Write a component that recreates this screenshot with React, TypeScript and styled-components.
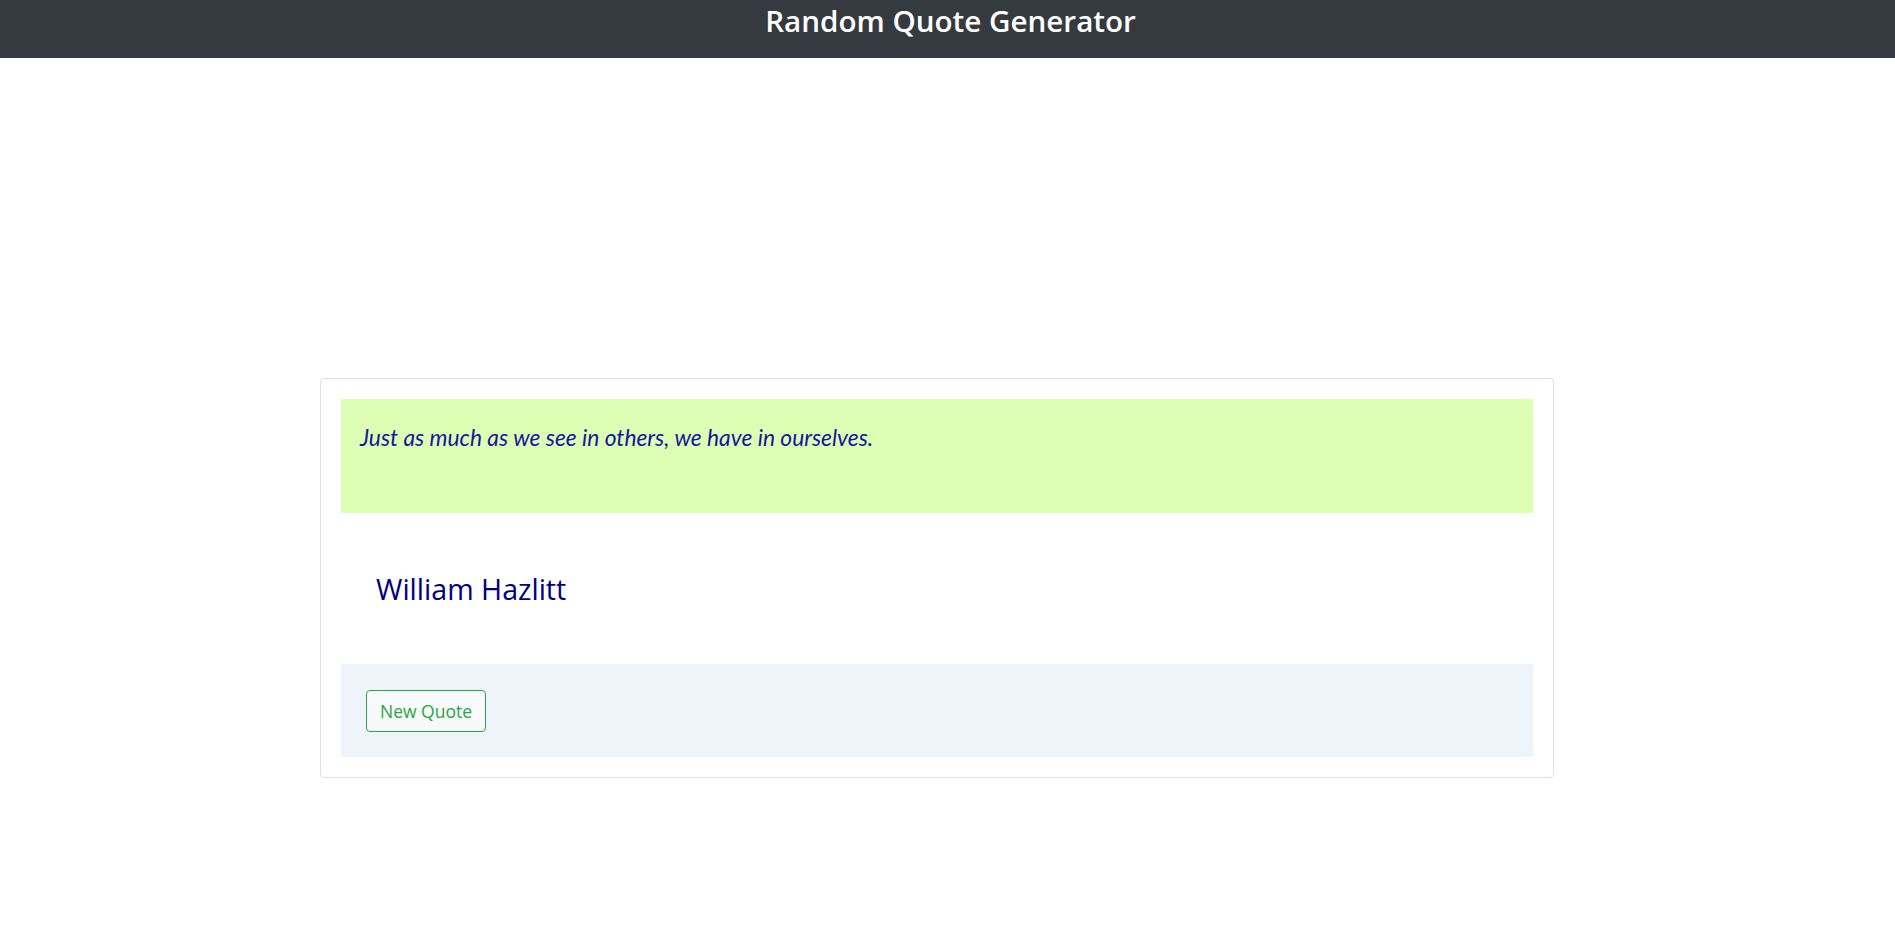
import React from "react";
import styled, { createGlobalStyle } from "styled-components";

const GlobalStyle = createGlobalStyle`
  html, body {
    margin: 0;
    padding: 0;
    background: #ffffff;
    font-family: "Open Sans", "Noto Sans", sans-serif;
  }
`;

const Header = styled.header`
  height: 58px;
  box-sizing: border-box;
  padding-top: 6px;
  background: #343a40;
  display: flex;
  justify-content: center;
`;

const Title = styled.h1`
  margin: 0 0 0 6px;
  color: #ffffff;
  font-family: "Open Sans", sans-serif;
  font-weight: 600;
  font-size: 29.6px;
  line-height: 30px;
`;

const Main = styled.main`
  padding: 320px 0 0 320px;
`;

const Card = styled.section`
  width: 1234px;
  box-sizing: border-box;
  border: 1px solid #dfdfdf;
  border-radius: 4px;
  padding: 20px;
  display: flex;
  flex-direction: column;
`;

const QuoteBox = styled.div`
  background: #ddffb4;
  height: 114px;
  box-sizing: border-box;
  padding: 24px 19px 0;
`;

const QuoteText = styled.p`
  margin: 0;
  font-family: "Lato", sans-serif;
  font-style: italic;
  font-size: 22.8px;
  line-height: normal;
  color: #16169e;
`;

const AuthorRow = styled.div`
  height: 151px;
  display: flex;
  align-items: center;
  padding-left: 35px;
`;

const Author = styled.h2`
  margin: 0;
  font-family: "Open Sans", sans-serif;
  font-weight: 400;
  font-size: 28.6px;
  line-height: normal;
  color: #000080;
`;

const Footer = styled.div`
  height: 93px;
  background: #eff3fa;
  display: flex;
  align-items: center;
  padding-left: 25px;
`;

const Button = styled.button`
  width: 120px;
  height: 42px;
  background: #f8f9fa;
  border: 1px solid #28a745;
  border-radius: 4px;
  color: #28a745;
  font-family: "Open Sans", sans-serif;
  font-size: 17.5px;
  cursor: pointer;
  padding: 0;
`;

export default function App() {
  return (
    <>
      <GlobalStyle />
      <Header>
        <Title>Random Quote Generator</Title>
      </Header>
      <Main>
        <Card>
          <QuoteBox>
            <QuoteText>Just as much as we see in others, we have in ourselves.</QuoteText>
          </QuoteBox>
          <AuthorRow>
            <Author>William Hazlitt</Author>
          </AuthorRow>
          <Footer>
            <Button>New Quote</Button>
          </Footer>
        </Card>
      </Main>
    </>
  );
}
